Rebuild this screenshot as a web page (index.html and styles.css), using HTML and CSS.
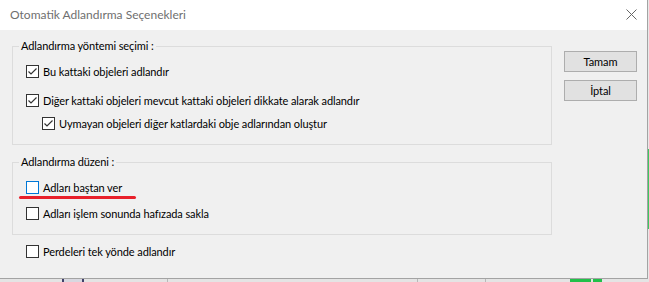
FILE: index.html
```html
<!DOCTYPE html>
<html lang="tr">
<head>
  <meta charset="UTF-8" />
  <title>Otomatik Adlandırma Seçenekleri</title>
  <link rel="stylesheet" href="styles.css">
</head>
<body>
  <div class="screen">
    <div class="window">
      <div class="titlebar">
        <span class="title">Otomatik Adlandırma Seçenekleri</span>
        <svg class="close" width="11" height="11" viewBox="0 0 11 11">
          <path d="M0.5 0.5 L10.5 10.5 M10.5 0.5 L0.5 10.5" stroke="#666" stroke-width="1" fill="none"/>
        </svg>
      </div>

      <div class="content">
        <div class="main">
          <fieldset class="group first">
            <legend>Adlandırma yöntemi seçimi :</legend>
            <label class="check"><span class="box checked"></span>Bu kattaki objeleri adlandır</label>
            <label class="check row2"><span class="box checked"></span>Diğer kattaki objeleri mevcut kattaki objeleri dikkate alarak adlandır</label>
            <label class="check row3 indent"><span class="box checked"></span>Uymayan objeleri diğer katlardaki obje adlarından oluştur</label>
          </fieldset>

          <fieldset class="group second">
            <legend>Adlandırma düzeni :</legend>
            <label class="check marked"><span class="box focus"></span>Adları baştan ver<span class="underline"></span></label>
            <label class="check row2b"><span class="box"></span>Adları işlem sonunda hafızada sakla</label>
          </fieldset>

          <label class="check single"><span class="box"></span>Perdeleri tek yönde adlandır</label>
        </div>

        <div class="side">
          <button class="btn">Tamam</button>
          <button class="btn">İptal</button>
        </div>
      </div>
    </div>
    <div class="edge"><span class="edge-green"></span></div>
  </div>

  <div class="behind">
    <span class="mark icon"></span>
    <span class="mark line l1"></span>
    <span class="mark line l2"></span>
    <span class="mark line l3"></span>
    <span class="mark green"></span>
    <span class="mark green g2"></span>
  </div>
</body>
</html>
```

FILE: styles.css
```css
body {
  margin: 0;
  background: #e4e4e4;
  font-family: "Lato", "Noto Sans", sans-serif;
  font-size: 11px;
  letter-spacing: -0.1px;
  color: #000;
  width: 649px;
  height: 282px;
  overflow: hidden;
}
.screen {
  display: flex;
}
.window {
  width: 648px;
  height: 279px;
  box-sizing: border-box;
  border-right: 1px solid #a3a3a3;
  border-bottom: 1px solid #a3a3a3;
  background: #f0f0f0;
}
.edge {
  width: 1px;
  height: 279px;
  background: #e8e8e8;
  padding-top: 149px;
  box-sizing: border-box;
}
.edge-green {
  display: block;
  height: 80px;
  background: #3cc860;
}
.titlebar {
  height: 30px;
  background: #fff;
  display: flex;
  align-items: center;
  justify-content: space-between;
  padding: 0 10px 0 10px;
}
.title {
  font-size: 12px;
  letter-spacing: 0;
  color: #6f6f6f;
  margin-top: -1px;
}
.close {
  margin-top: -1px;
}
.content {
  display: flex;
}
.main {
  margin-left: 12px;
  width: 540px;
}
.group {
  margin: 0;
  border: 1px solid #dcdcdc;
  padding: 8px 13px 11px;
}
.group.first {
  margin-top: 9px;
}
.group.second {
  margin-top: 10px;
}
.group legend {
  margin-left: -7px;
  padding: 0 2px;
  line-height: 14px;
}
.check {
  display: flex;
  align-items: center;
  height: 20px;
  white-space: nowrap;
}
.check.row2 {
  margin-top: 9px;
}
.check.row3 {
  margin-top: 3px;
}
.check.indent {
  margin-left: 16px;
}
.check.row2b {
  margin-top: 6px;
}
.check.single {
  margin: 6px 0 0 14px;
}
.check.marked {
  position: relative;
}
.box {
  width: 13px;
  height: 13px;
  box-sizing: border-box;
  border: 1px solid #333;
  background: #fff;
  margin-right: 4px;
  flex: none;
}
.box.checked {
  background: #fff url("data:image/svg+xml,%3Csvg xmlns='http://www.w3.org/2000/svg' width='11' height='11' viewBox='0 0 11 11'%3E%3Cpath d='M1.5 5.5 L4 8 L9.5 2.5' stroke='%23333' stroke-width='1.2' fill='none'/%3E%3C/svg%3E") no-repeat center;
}
.box.focus {
  border-color: #0078d7;
}
.underline {
  position: absolute;
  left: -7px;
  top: 19px;
  width: 117px;
  height: 3px;
  border-radius: 2px;
  background: #e8202a;
}
.side {
  margin: 21px 0 0 12px;
  display: flex;
  flex-direction: column;
  gap: 8px;
}
.btn {
  width: 73px;
  height: 21px;
  border: 1px solid #adadad;
  background: #e1e1e1;
  font-family: inherit;
  font-size: 11px;
  letter-spacing: -0.1px;
  padding: 0;
  color: #000;
}
.behind {
  height: 3px;
  display: flex;
  align-items: stretch;
}
.mark {
  display: block;
}
.mark.icon {
  width: 22px;
  margin-left: 62px;
  box-sizing: border-box;
  border-left: 2px solid #40406a;
  border-right: 2px solid #40406a;
  background: #d8d8e0;
}
.mark.line {
  width: 1px;
  background: #b8b8b8;
}
.l1 { margin-left: 83px; }
.l2 { margin-left: 249px; }
.l3 { margin-left: 67px; }
.mark.green {
  width: 21px;
  margin-left: 84px;
  background: #22c04a;
}
.mark.green.g2 {
  width: 9px;
  margin-left: 2px;
}
```
